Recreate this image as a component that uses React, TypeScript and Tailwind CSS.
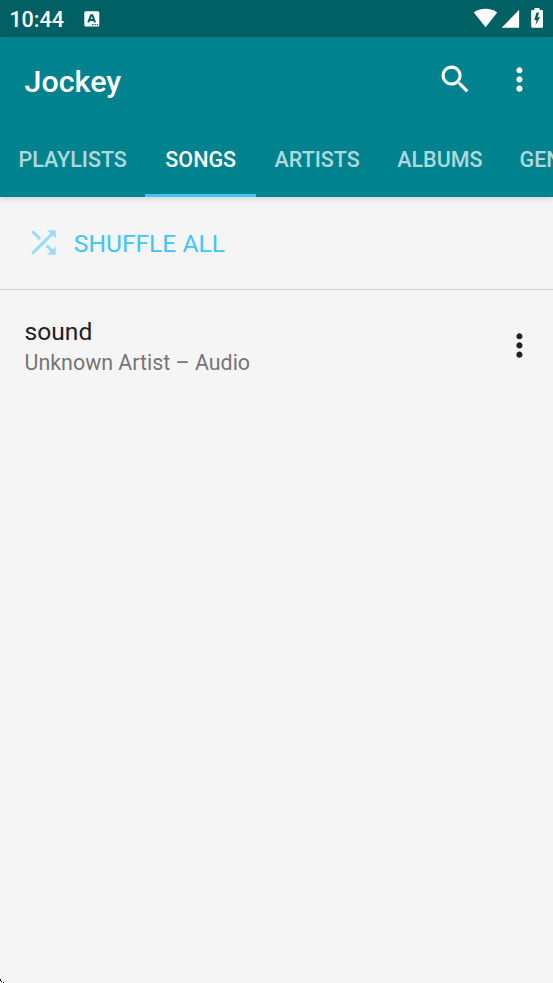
import clsx from "clsx";

const TABS = [
  { label: "PLAYLISTS", width: "w-[145.4px]" },
  { label: "SONGS", width: "w-[110.6px]" },
  { label: "ARTISTS", width: "w-[122.4px]" },
  { label: "ALBUMS", width: "w-[123px]" },
  { label: "GENRES", width: "w-[117px]" },
];

function StatusBar() {
  return (
    <div className="flex h-[37px] items-center bg-[#006064] pl-[9.4px] text-white">
      <span className="w-[74.6px] pt-[2px] text-[21.5px] leading-[35px] font-medium whitespace-nowrap">10:44</span>
      <svg className="h-4 w-4" viewBox="0 0 16 16">
        <rect x="0.3" y="0.3" width="15" height="15.2" rx="1.5" fill="#fff" />
        <path d="M4.3 11.3 7 4.200h1.300l2.700 7.100M5.400 9h4.500" fill="none" stroke="#006064" strokeWidth="2" />
        <path d="M8 13h1.500v1.200H8zm2.500 0h1.300v1.200h-1.300zm2.300 0h1.300v1.200h-1.300z" fill="#006064" />
      </svg>
      <svg className="ml-auto h-[37px] w-[83px]" viewBox="470 0 83 37" fill="#fff">
        <path d="M473.800 12.400C477 10 481 8.800 485.500 8.800S494 10 497.200 12.400L485.600 27.300Z" />
        <path d="M519.100 9.700V27.800H501.700Z" />
        <path
          fillRule="evenodd"
          d="M534.500 8h5v2h2.200q1.300 0 1.300 1.300v15.200q0 1.300-1.300 1.300h-9.200q-1.300 0-1.300-1.300V11.300q0-1.300 1.300-1.300h2zM539 12.500h-2.500l-2.300 7.400h2.300l-1 5.400 4.600-8h-2.400z"
        />
      </svg>
    </div>
  );
}

function MoreIcon({ className }: { className?: string }) {
  return (
    <svg className={clsx("h-[36.9px] w-[36.9px] shrink-0", className)} viewBox="0 0 24 24" fill="currentColor">
      <path d="M12 8c1.100 0 2-.9 2-2s-.9-2-2-2-2 .9-2 2 .9 2 2 2zm0 2c-1.100 0-2 .9-2 2s.9 2 2 2 2-.9 2-2-.9-2-2-2zm0 6c-1.100 0-2 .9-2 2s.9 2 2 2 2-.9 2-2-.9-2-2-2z" />
    </svg>
  );
}

function Toolbar() {
  return (
    <div className="flex h-[85px] items-center pr-[15px] pl-[24.6px]">
      <h1 className="flex-1 pt-[4px] text-[30.4px] leading-9 font-medium">Jockey</h1>
      <svg className="mr-[27.6px] h-[36.9px] w-[36.9px]" viewBox="0 0 24 24" fill="currentColor">
        <path d="M15.500 14h-.79l-.28-.27C15.410 12.590 16 11.110 16 9.500 16 5.910 13.090 3 9.500 3S3 5.910 3 9.500 5.910 16 9.500 16c1.610 0 3.090-.59 4.230-1.570l.27.28v.79l5 4.990L20.490 19l-4.990-5zm-6 0C7.010 14 5 11.990 5 9.500S7.010 5 9.500 5 14 7.010 14 9.500 11.990 14 9.500 14z" />
      </svg>
      <MoreIcon />
    </div>
  );
}

function TabBar({ active }: { active: string }) {
  return (
    <div className="flex h-[74.6px] overflow-hidden">
      {TABS.map((tab) => (
        <div
          key={tab.label}
          className={clsx(
            "flex shrink-0 items-center justify-center border-b-[3px] pt-[5px] text-[21.5px] font-medium whitespace-nowrap",
            tab.width,
            tab.label === active ? "border-[#40c4ff] text-white" : "border-transparent text-white/70"
          )}
        >
          {tab.label}
        </div>
      ))}
    </div>
  );
}

export default function App() {
  return (
    <div className="relative flex h-[983px] w-[553px] flex-col overflow-hidden bg-[#f5f5f5] font-['Roboto',sans-serif]">
      <StatusBar />
      <header className="z-10 bg-[#00838f] text-white shadow-[0_2px_6px_rgba(0,0,0,0.14)]">
        <Toolbar />
        <TabBar active="SONGS" />
      </header>
      <button className="flex h-[93.4px] items-center border-b border-[#d2d2d2] pl-[24.6px] text-[24.6px] text-[#40c4ff]">
        <svg className="mr-[12.3px] h-[36.9px] w-[36.9px] opacity-50" viewBox="0 0 24 24" fill="currentColor">
          <path d="M10.590 9.170L5.410 4 4 5.410l5.170 5.170 1.420-1.410zM14.500 4l2.040 2.040L4 18.590 5.410 20 17.960 7.460 20 9.500V4h-5.500zm.33 9.410l-1.410 1.410 3.130 3.130L14.500 20H20v-5.500l-2.040 2.040-3.130-3.130z" />
        </svg>
        <span className="pt-[3px]">SHUFFLE ALL</span>
      </button>
      <div className="flex h-[111px] items-center pr-[15px] pl-[24.6px]">
        <div className="flex-1 pt-[3px]">
          <div className="text-[24.6px] leading-[32px] text-[#212121]">sound</div>
          <div className="text-[21.4px] leading-[30px] text-[#757575]">Unknown Artist – Audio</div>
        </div>
        <MoreIcon className="text-[#212121]" />
      </div>
      <svg className="absolute bottom-0 left-0 h-1 w-1" viewBox="0 0 4 4" fill="#000" shapeRendering="crispEdges">
        <path d="M0 0h1v2H0zM1 2h1v1H1zM3 3h1v1H3z" />
      </svg>
    </div>
  );
}
